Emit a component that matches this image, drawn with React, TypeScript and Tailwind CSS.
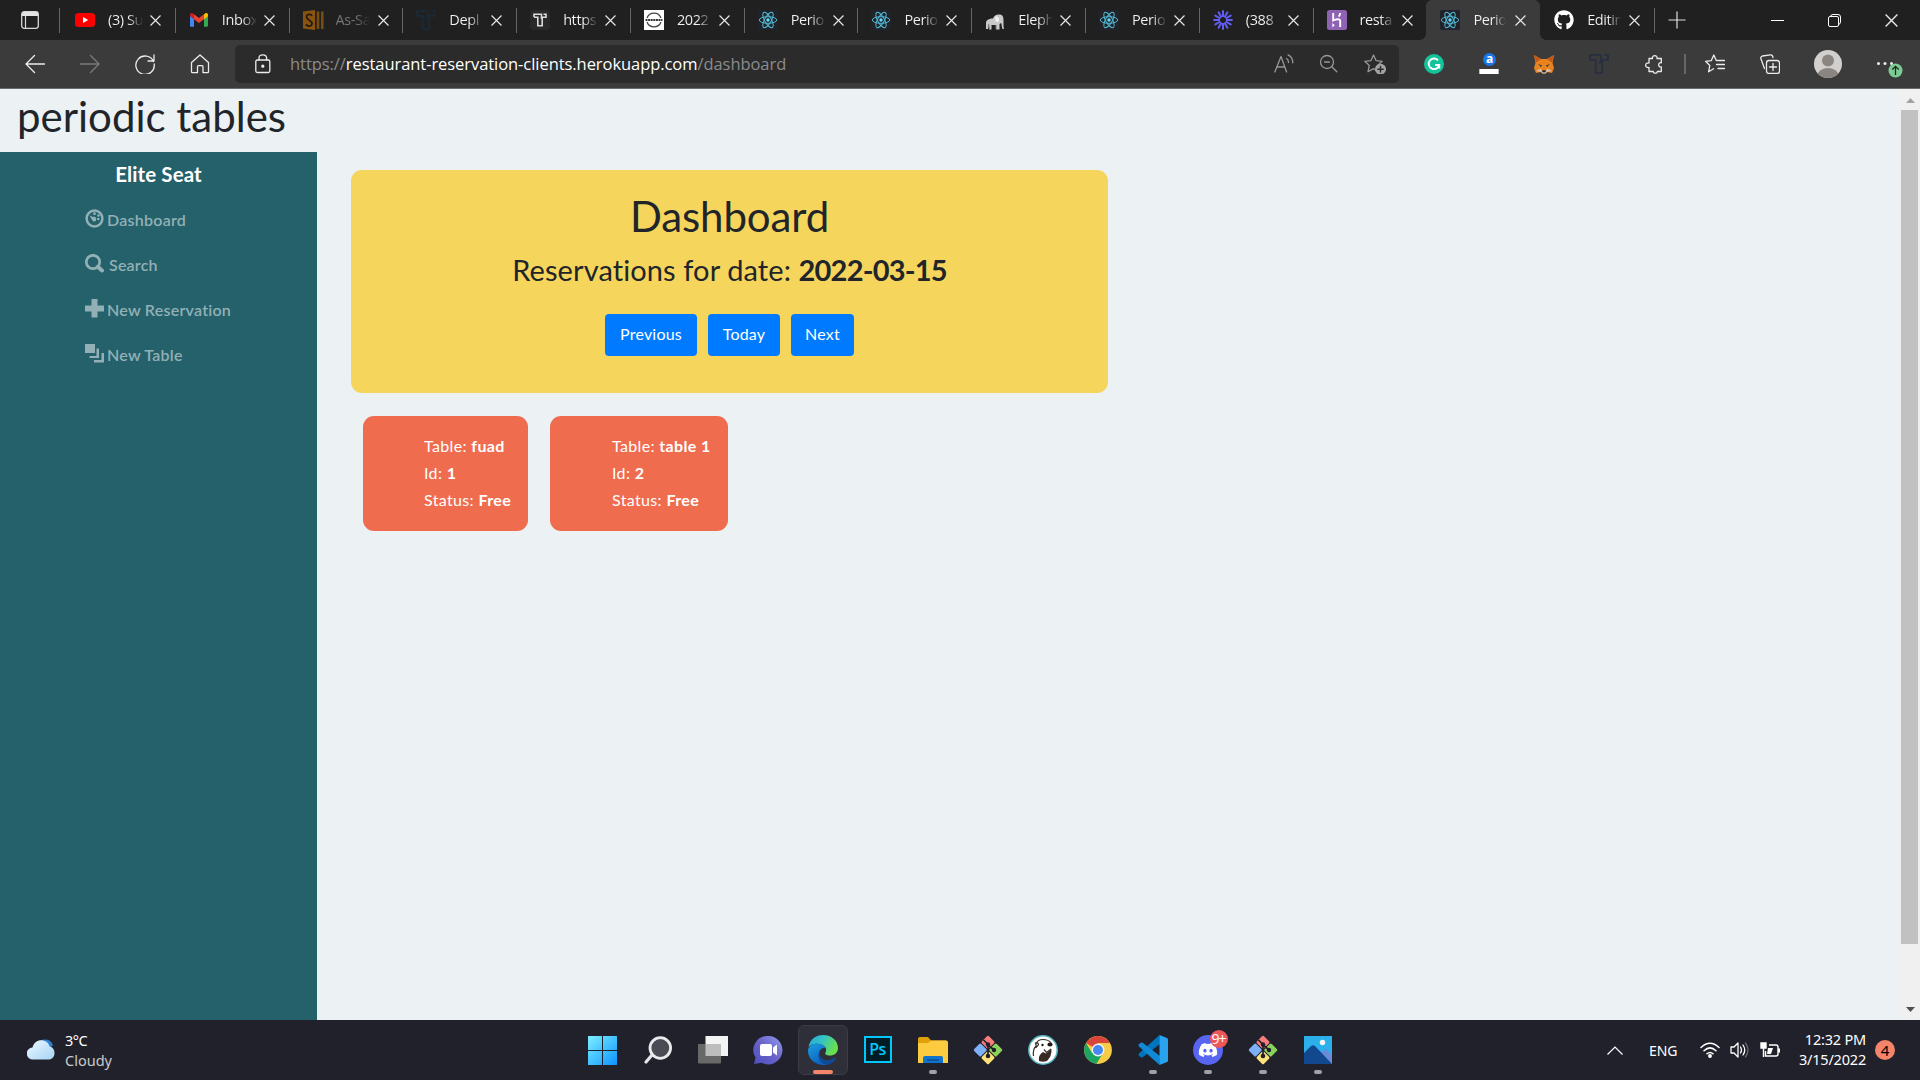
import React from 'react';
import { FaGithub, FaDiscord } from 'react-icons/fa';

type IconFn = () => React.ReactElement;

const YouTube: IconFn = () => (
  <svg width="20" height="20" viewBox="0 0 20 20">
    <rect y="3" width="20" height="14" rx="3.5" fill="#f00" />
    <path d="M8 7l5.2 3L8 13z" fill="#fff" />
  </svg>
);

const Gmail: IconFn = () => (
  <svg width="20" height="20" viewBox="0 0 20 20">
    <path d="M1 5.5v10c0 .8.6 1.3 1.3 1.3H5V8.5z" fill="#4285f4" />
    <path d="M19 5.5v10c0 .8-.6 1.3-1.3 1.3H15V8.5z" fill="#34a853" />
    <path d="M15 4.3v4.9l4-3V4.8c0-1.7-1.8-2.3-2.9-1.4z" fill="#fbbc04" />
    <path d="M5 9.2V4.3l5 3.8 5-3.8v4.9l-5 3.8z" fill="#ea4335" />
    <path d="M1 4.8v1.4l4 3V4.3l-1.1-.9C2.8 2.5 1 3.1 1 4.8z" fill="#c5221f" />
  </svg>
);

const SGold: IconFn = () => (
  <svg width="21" height="20" viewBox="0 0 21 20">
    <path d="M0 1.5L12 0v20L0 18.5z" fill="#8a5410" />
    <path d="M9 6C8 3.500 3.500 4 3.500 7s5.500 3.500 5.500 6.500-4.500 3.500-6 .8" fill="none" stroke="#241c10" strokeWidth="1.8" />
    <path d="M15 1.500v17.500M19.300 1.500v17.500" stroke="#7a4c10" strokeWidth="2.6" />
  </svg>
);

const ThinkfulT = ({ color, size = 20 }: { color: string; size?: number }) => (
  <svg width={size} height={size} viewBox="0 0 20 20" fill="none" stroke={color} strokeWidth="1.7">
    <path d="M.9 5.500V1H12v7.500h-2.500" />
    <path d="M.9 5.800h5.700V19h6.600V5.800H19V1h-3.500" />
  </svg>
);

const DarkT: IconFn = () => <ThinkfulT color="#1b2a38" />;

const TileT: IconFn = () => (
  <span className="flex size-5 items-center justify-center rounded bg-[#2a2a2a]">
    <svg width="14" height="14" viewBox="0 0 14 14" fill="none" stroke="#dcdcdc" strokeWidth="1.6">
      <path d="M1 4V1.200h7.500V6" />
      <path d="M1 4.200h3.800v8.600h4.400V4.200H13V1.200h-2.500" />
    </svg>
  </span>
);

const Nissan: IconFn = () => (
  <svg width="20" height="20" viewBox="0 0 20 20">
    <rect width="20" height="20" fill="#fff" />
    <path d="M3 8a7.500 7.500 0 0 1 14 0M3 12a7.500 7.500 0 0 0 14 0" fill="none" stroke="#444" strokeWidth="1.3" />
    <path d="M1.500 10h17" stroke="#333" strokeWidth="2" strokeDasharray="2 .6" />
  </svg>
);

const ReactLogo: IconFn = () => (
  <svg width="20" height="20" viewBox="-10 -10 20 20" fill="none" stroke="#52b8d4" strokeWidth="1">
    <rect x="-10" y="-10" width="20" height="20" rx="2" fill="#20242a" stroke="none" />
    <ellipse rx="8.7" ry="3.3" />
    <ellipse rx="8.7" ry="3.3" transform="rotate(60)" />
    <ellipse rx="8.7" ry="3.3" transform="rotate(120)" />
    <circle r="1.7" fill="#61dafb" stroke="none" />
  </svg>
);

const Elephant: IconFn = () => (
  <svg width="20" height="20" viewBox="0 0 20 20">
    <path d="M1 19V13c0-3 3-4.500 7-4.500C9 5 12 4 15 4.500c3 .5 3.500 3 3.500 6 0 3-.2 6 .5 8.500h-1.500c-.8-2-.8-4-1.300-6L14.500 14v5.500H11V15H6.500v4.500H4l-.5-5L3 19z" fill="#c9c9c9" />
    <path d="M10 7c2-1 4 0 4 2.500S12 13 10.500 11z" fill="#efefef" />
    <path d="M3.500 14l1 5M11 15v4" stroke="#777" strokeWidth="1" />
  </svg>
);

const Loom: IconFn = () => (
  <svg width="20" height="20" viewBox="-10 -10 20 20" stroke="#625df5" strokeWidth="2" strokeLinecap="round">
    {[0, 30, 60, 90, 120, 150, 180, 210, 240, 270, 300, 330].map((a) => (
      <path key={a} d="M0 -4V-8.900" transform={`rotate(${a})`} />
    ))}
    <circle r="3.8" fill="none" strokeWidth="1.3" />
  </svg>
);

const Heroku: IconFn = () => (
  <svg width="20" height="20" viewBox="0 0 20 20">
    <rect width="20" height="20" rx="2.5" fill="#8f62b3" />
    <path d="M6.200 3v7.500c2-1 7-2.500 7 .5v6M13.200 3c0 1.500-.6 2.600-1.600 3.700" fill="none" stroke="#fff" strokeWidth="1.9" />
    <path d="M5.300 13v4.400l2.500-2.200z" fill="#fff" />
  </svg>
);

const Github: IconFn = () => <FaGithub size={20} color="#fff" />;

const tabs: { icon: IconFn; title: string; dim?: boolean; active?: boolean }[] = [
  { icon: YouTube, title: '(3) Su' },
  { icon: Gmail, title: 'Inbox' },
  { icon: SGold, title: 'As-Sa', dim: true },
  { icon: DarkT, title: 'Depl' },
  { icon: TileT, title: 'https' },
  { icon: Nissan, title: '2022' },
  { icon: ReactLogo, title: 'Perio' },
  { icon: ReactLogo, title: 'Perio' },
  { icon: Elephant, title: 'Eleph' },
  { icon: ReactLogo, title: 'Perio' },
  { icon: Loom, title: '(388' },
  { icon: Heroku, title: 'resta' },
  { icon: ReactLogo, title: 'Perio', active: true },
  { icon: Github, title: 'Editin' },
];

function Close({ size = 11 }: { size?: number }) {
  return (
    <svg width={size} height={size} viewBox="0 0 11 11" stroke="#e6e6e6" strokeWidth="1.2" className="shrink-0">
      <path d="M.5 .5l10 10M10.500 .5l-10 10" />
    </svg>
  );
}

function TabStrip() {
  return (
    <div className="flex h-10 bg-[#202020]">
      <div className="flex w-[61px] shrink-0 items-center pl-[21px]">
        <svg width="18" height="18" viewBox="0 0 18 18">
          <rect x=".7" y=".7" width="16.600" height="16.600" rx="2.5" fill="none" stroke="#d8d8d8" strokeWidth="1.3" />
          <path d="M1 2.500Q1 1 3 1h12q2 0 2 2v2H1z" fill="#e4e4e4" />
          <path d="M4.500 5v12" stroke="#d8d8d8" strokeWidth="1.2" />
        </svg>
      </div>
      <div className="relative flex w-[1593px] shrink-0">
        <div className="absolute top-2 -left-0.5 h-[25px] w-px bg-[#666]" />
        {tabs.map((t, i) => (
          <div
            key={i}
            className={
              t.active
                ? 'relative flex min-w-0 flex-1 items-center rounded-t-md bg-[#3b3b3b] pl-[14px]'
                : 'relative flex min-w-0 flex-1 items-center pl-[14px] first:pl-[12px]'
            }
          >
            {t.active && (
              <>
                <span className="absolute bottom-0 -left-1.5 size-1.5 bg-[radial-gradient(circle_at_0_0,transparent_5.5px,#3b3b3b_6px)]" />
                <span className="absolute -right-1.5 bottom-0 size-1.5 bg-[radial-gradient(circle_at_100%_0,transparent_5.5px,#3b3b3b_6px)]" />
              </>
            )}
            <span className="flex w-[33px] shrink-0">
              <t.icon />
            </span>
            <span
              className={
                t.dim
                  ? "w-[34px] bg-gradient-to-r from-[#777] from-60% to-[#202020] bg-clip-text font-['Open_Sans'] text-[14.5px] tracking-[-0.4px] whitespace-nowrap text-transparent"
                  : "w-[34px] bg-gradient-to-r from-[#f4f4f4] from-60% to-[#303030] bg-clip-text font-['Open_Sans'] text-[14.5px] tracking-[-0.4px] whitespace-nowrap text-transparent"
              }
            >
              {t.title}
            </span>
            <span className="ml-[8px] flex pt-px">
              <Close />
            </span>
            {!t.active && i !== 11 && <span className="absolute top-2 -right-px h-[25px] w-px bg-[#666]" />}
          </div>
        ))}
      </div>
      <div className="flex flex-1 items-center pl-[14px]">
        <svg width="18" height="18" viewBox="0 0 18 18" stroke="#dedede" strokeWidth="1.2" className="-mt-px">
          <path d="M9 .5v17M.5 9h17" />
        </svg>
        <div className="ml-auto flex items-center gap-[44px] pr-[22px]">
          <svg width="13" height="14" viewBox="0 0 13 14" stroke="#fff" className="-ml-px"><path d="M0 7.500h13" /></svg>
          <svg width="13" height="13" viewBox="0 0 13 13" fill="none" stroke="#fff">
            <rect x=".5" y="2.5" width="10" height="10" rx="1.5" />
            <path d="M2.500 2.500Q2.700 .5 5 .5h5q2.500 0 2.500 2.500v5q0 2-2 2.500" />
          </svg>
          <Close size={13} />
        </div>
      </div>
    </div>
  );
}

const S = ({ children, w = 20, c = '#ececec', sw = 1.3 }: { children: React.ReactNode; w?: number; c?: string; sw?: number }) => (
  <svg width={w} height="20" viewBox={`0 0 ${w} 20`} fill="none" stroke={c} strokeWidth={sw} strokeLinecap="round" strokeLinejoin="round" className="shrink-0">
    {children}
  </svg>
);

const star = 'M9.500 1l2.500 5.600 6.200.7-4.600 4.200 1.300 6.200-5.400-3.100L4 17.700l1.300-6.200L.8 7.300 7 6.600z';

function Toolbar() {
  return (
    <div className="flex h-[49px] items-center border-b border-[#6c6c6c] bg-[#3b3b3b] pl-[25px]">
      <div className="flex items-center gap-[35px]">
        <S><path d="M19.500 10H1M9.500 1.500L1 10l8.500 8.500" /></S>
        <S c="#7b7b7b"><path d="M.5 10H19M10.500 1.500L19 10l-8.500 8.500" /></S>
        <S><path d="M18.500 7.500A9.200 9.200 0 1 0 19.200 10M19 1v6h-6" /></S>
        <S><path d="M1.500 8.500L10 1l8.500 7.500v9.200q0 1-1 1H13v-6q0-1-1-1H8.500q-1 0-1 1v6H2.500q-1 0-1-1z" /></S>
      </div>
      <div className="ml-[25px] flex h-[38px] w-[1164px] shrink-0 items-center rounded-[5px] bg-[#2b2b2b] pl-5">
        <S w={16}>
          <rect x=".8" y="6" width="14" height="12.500" rx="1.5" />
          <path d="M4 6V4q0-3.200 3.800-3.200T11.600 4v2" />
          <circle cx="7.800" cy="12.200" r="1" fill="#eee" />
        </S>
        <div className="ml-[19px] font-['Open_Sans'] text-[16.5px] tracking-[-0.06px] whitespace-nowrap text-[#8b8b8b]">
          https://<span className="text-white">restaurant-reservation-clients.herokuapp.com</span>/dashboard
        </div>
        <div className="ml-auto flex items-center gap-[25px] pr-[13px]">
          <S c="#979797">
            <path d="M.8 18L7 2.500 12.600 18M2.800 13h8M12.500 4.500q2 1.200 2 4M14 .8q4.800 2 4.800 8" />
          </S>
          <S c="#979797">
            <circle cx="8" cy="8" r="6.500" /><path d="M5.500 8h5M12.800 12.800l5 5" />
          </S>
          <S w={22} c="#979797">
            <path d={star} />
            <circle cx="16.500" cy="15.200" r="5.500" fill="#a3a3a3" stroke="none" />
            <path d="M16.500 12.500v5.400M13.800 15.200h5.400" stroke="#2b2b2b" strokeWidth="1.5" />
          </S>
        </div>
      </div>
      <div className="ml-[25px] flex items-center gap-[35px]">
        <svg width="20" height="20" viewBox="0 0 20 20">
          <circle cx="10" cy="10" r="10" fill="#15c39a" />
          <path d="M14 6.300a5.300 5.300 0 1 0 1.200 4.700H11M15.300 11v3.500" fill="none" stroke="#fff" strokeWidth="1.9" />
        </svg>
        <span className="relative flex size-5 items-end">
          <span className="absolute -top-px left-1 flex size-[13px] items-center justify-center rounded-full bg-[#1877e8] pb-0.5 font-['Open_Sans'] text-[12px] leading-none font-bold text-white">a</span>
          <span className="h-[5px] w-full border-x border-[#bbb] bg-white" />
        </span>
        <svg width="20" height="20" viewBox="0 0 20 20">
          <path d="M0 1l7 4h6l7-4-1.500 8L20 14l-2 5-5-1-1.500 1.500h-3L7 18l-5 1-2-5 1.500-5z" fill="#e8831d" />
          <path d="M0 1l7 4-5 3.500zM20 1l-7 4 5 3.500z" fill="#c1591b" />
          <path d="M4 10l4 1.500L7 13zM16 10l-4 1.500 1 1.500z" fill="#233447" />
          <path d="M6.500 14.500L2 17l5 1 1.500 1.500h3L13 18l5-1-4.500-2.500L12 17H8z" fill="#d6bfb2" />
          <path d="M8.300 16.300h3.400v2H8.300z" fill="#222" />
        </svg>
        <ThinkfulT color="#252f40" />
        <S><path d="M5 4.500h3.500c-1-3.800 5.500-3.800 4.500 0H17.300v4.300c-3.500-.8-3.500 4.800 0 4v4.700h-4c.5 2.200-4.500 2.200-4 0H5v-4c-4.500 .5-4.500-5 0-4.500z" /></S>
      </div>
      <div className="ml-5 h-5 w-0.5 bg-[#666]" />
      <div className="ml-[19px] flex items-center gap-[35px]">
        <S>
          <path d="M12.500 6.500H11.300L8.800 1 6.300 6.600.6 7.300l4.200 4.200-1.200 6.300 5-3M13.500 6.500h6M11.500 10.500h8M13 14.500h6.500" />
        </S>
        <S>
          <rect x="6.500" y="6.500" width="13" height="13" rx="2.5" />
          <path d="M13 9.500v7M9.500 13h7M4.500 14.500L1 5q-.8-2.200 1.300-3L10.500.8q2-.2 2.500 2.700" />
        </S>
      </div>
      <svg width="28" height="28" viewBox="0 0 28 28" className="ml-[34px] shrink-0">
        <clipPath id="avatar"><circle cx="14" cy="14" r="14" /></clipPath>
        <circle cx="14" cy="14" r="14" fill="#d2d0ce" />
        <g fill="#8a8581" clipPath="url(#avatar)"><circle cx="14" cy="10.500" r="6" /><ellipse cx="14" cy="25.500" rx="10.500" ry="7.500" /></g>
      </svg>
      <svg width="28" height="28" viewBox="0 0 28 28" className="ml-[34px] shrink-0">
        <g fill="#eee"><circle cx="2.500" cy="13.500" r="1.500" /><circle cx="9" cy="13.500" r="1.500" /><circle cx="15.500" cy="13.500" r="1.500" /></g>
        <circle cx="19.500" cy="20.500" r="7" fill="#7ccb94" />
        <path d="M19.500 25v-8.500M16.300 19.500l3.200-3.200 3.200 3.200" fill="none" stroke="#1e2a22" strokeWidth="1.3" />
      </svg>
    </div>
  );
}

const navItems: { label: string; nudge?: boolean; icon: React.ReactNode }[] = [
  {
    label: 'Dashboard',
    icon: (
      <>
        <circle cx="9.500" cy="9.500" r="7.900" fill="none" stroke="currentColor" strokeWidth="2.5" />
        <path d="M4.500 6.500L8 8c2-1 4 1 3 3.500-.8 1.800-3.500 1.300-4-.8z" />
        <circle cx="9.500" cy="4.700" r="1.400" /><circle cx="13.500" cy="6.500" r="1.300" /><circle cx="13.300" cy="10" r="1.300" />
      </>
    ),
  },
  {
    label: 'Search',
    nudge: true,
    icon: (
      <>
        <circle cx="8" cy="8" r="6.700" fill="none" stroke="currentColor" strokeWidth="2.7" />
        <path d="M12.800 12.800l4.200 3.700" stroke="currentColor" strokeWidth="4" strokeLinecap="round" />
      </>
    ),
  },
  { label: 'New Reservation', icon: <path d="M6.500 0h6v6.500H19v6h-6.500V18.500h-6v-6H0v-6h6.500z" /> },
  { label: 'New Table', icon: <path d="M0 0h10v9H0zM11.500 4.500H14V14H4.500v-2h7zM16.500 9H19v9.500H9V16h7.500z" /> },
];

function Sidebar() {
  return (
    <aside className="w-[317px] shrink-0 bg-[#25616b] font-['Lato']">
      <div className="flex h-[45px] items-center justify-center pb-px text-[20.5px] font-bold tracking-[0.1px] text-white">Elite Seat</div>
      <nav className="pl-[85px] text-[#92b0b5]">
        {navItems.map((n) => (
          <a key={n.label} className="flex h-[45px] items-center">
            <svg width="19" height="19" viewBox="0 0 19 19" fill="currentColor" className="mb-0.5 shrink-0">{n.icon}</svg>
            <span
              className={
                n.nudge
                  ? 'ml-[5px] text-[16px] font-semibold tracking-[0.2px]'
                  : 'ml-[3px] text-[16px] font-semibold tracking-[0.25px]'
              }
            >
              {n.label}
            </span>
          </a>
        ))}
      </nav>
    </aside>
  );
}

function TableCard({ name, id, wide }: { name: string; id: number; wide?: boolean }) {
  return (
    <div
      className={
        wide
          ? 'h-[115px] w-[178px] rounded-[11px] bg-[#ef6c4e] pt-[16px] pl-[62px] text-white'
          : 'h-[115px] w-[165px] rounded-[11px] bg-[#ef6c4e] pt-[16px] pl-[61px] text-white'
      }
    >
      <div className="text-[16px] leading-[27px] tracking-[0.35px] whitespace-nowrap">
        <p>Table: <b>{name}</b></p>
        <p>Id: <b>{id}</b></p>
        <p>Status: <b>Free</b></p>
      </div>
    </div>
  );
}

function Page() {
  return (
    <div className="flex h-[931px] bg-[#ecf1f4]">
      <div className="flex flex-1 flex-col">
        <h1 className="flex h-[63px] items-center pb-[8px] pl-[17px] font-['Lato'] text-[42px] text-[#212529]">periodic tables</h1>
        <div className="flex flex-1">
          <Sidebar />
          <main className="flex-1 pt-[18px] pl-[34px] font-['Lato']">
            <section className="flex h-[223px] w-[757px] flex-col items-center rounded-[11px] bg-[#f5d55b] text-[#212529]">
              <h2 className="mt-[19px] text-[42px] leading-[54px] tracking-[-0.1px]">Dashboard</h2>
              <p className="mt-[7px] text-[29px] leading-[40px] tracking-[0.1px] whitespace-nowrap">
                Reservations for date: <b className="tracking-[-0.8px]">2022-03-15</b>
              </p>
              <div className="mt-[24px] flex gap-[11px] text-[16px] tracking-[0.2px] text-white">
                <button className="h-[42px] w-[92px] rounded bg-[#007bff] pb-0.5">Previous</button>
                <button className="h-[42px] w-[72px] rounded bg-[#007bff] pb-0.5">Today</button>
                <button className="h-[42px] w-[63px] rounded bg-[#007bff] pb-0.5">Next</button>
              </div>
            </section>
            <div className="mt-[23px] ml-3 flex gap-[22px]">
              <TableCard name="fuad" id={1} />
              <TableCard name="table 1" id={2} wide />
            </div>
          </main>
        </div>
      </div>
      <div className="flex w-5 shrink-0 flex-col items-center bg-[#f0f0f0] pb-2">
        <svg width="9" height="5" viewBox="0 0 9 5" className="mt-[9px]"><path d="M0 5L4.500 0 9 5z" fill="#a3a3a3" /></svg>
        <div className="mt-[7px] mr-px h-[834px] w-[17px] bg-[#c1c1c1]" />
        <svg width="9" height="5" viewBox="0 0 9 5" className="mt-auto"><path d="M0 0h9L4.500 5z" fill="#505050" /></svg>
      </div>
    </div>
  );
}

const I = ({ children }: { children: React.ReactNode }) => (
  <svg width="30" height="30" viewBox="0 0 30 30">{children}</svg>
);

const GitIcon = () => (
  <I>
    <g transform="rotate(45 15 15)">
      <rect x="4.500" y="4.500" width="10" height="10" rx="1.5" fill="#f97c7c" />
      <rect x="15.500" y="4.500" width="10" height="10" rx="1.5" fill="#8bd15c" />
      <rect x="4.500" y="15.500" width="10" height="10" rx="1.5" fill="#7eb0f8" />
      <rect x="15.500" y="15.500" width="10" height="10" rx="1.5" fill="#fde27a" />
    </g>
    <path d="M10.500 5L15 9.500V21M15 10l6 5" stroke="#20202a" strokeWidth="1.7" fill="none" />
    <g fill="#20202a"><circle cx="15" cy="9.500" r="2.200" /><circle cx="21" cy="15" r="2.200" /><circle cx="15" cy="21" r="2.300" /></g>
  </I>
);

const dock: { key: string; icon: React.ReactNode; run?: boolean; active?: boolean }[] = [
  {
    key: 'start',
    icon: (
      <I>
        <defs><linearGradient id="win" x1="0" y1="0" x2="1" y2="1" gradientUnits="objectBoundingBox"><stop stopColor="#7df0ff" /><stop offset="1" stopColor="#0b93ff" /></linearGradient></defs>
        <path d="M0 1.500q0-.5.5-.5h13.500v14H0zM15 1h13.500q.5 0 .5.500V15h-14zM0 16h14v14H.5q-.5 0-.5-.5zM15 16h14v13.500q0 .5-.5.500H15z" fill="url(#win)" />
      </I>
    ),
  },
  {
    key: 'search',
    icon: (
      <I>
        <path d="M9 20l-6 7" stroke="#e4e7ea" strokeWidth="3.2" strokeLinecap="round" />
        <circle cx="17.300" cy="13" r="10.300" fill="#4a4b55" stroke="#e8ebee" strokeWidth="2.8" />
      </I>
    ),
  },
  {
    key: 'taskview',
    icon: (
      <I>
        <rect x="7.500" y="1" width="22.500" height="20" fill="#f3f3f3" />
        <rect x="0" y="9" width="23" height="19.500" rx="1" fill="#686868" />
        <rect x="7.500" y="9" width="15.500" height="12" fill="#bdbdbd" />
      </I>
    ),
  },
  {
    key: 'chat',
    icon: (
      <I>
        <defs><linearGradient id="chat" x1="0" y1="1" x2="1" y2="0"><stop stopColor="#4b4fc0" /><stop offset=".5" stopColor="#6a62c8" /><stop offset="1" stopColor="#8f9cf0" /></linearGradient></defs>
        <path d="M15 1a14.200 14.200 0 1 1-6.500 26.700L1 29l1.500-6.300A14.200 14.200 0 0 1 15 1z" fill="url(#chat)" />
        <rect x="7" y="9" width="12" height="12" rx="2" fill="#fff" /><path d="M20 12.500L24 9.500v11l-4-3z" fill="#fff" />
      </I>
    ),
  },
  {
    key: 'edge',
    active: true,
    icon: (
      <I>
        <defs>
          <linearGradient id="e1" x1="0" y1="0" x2="1" y2=".4"><stop stopColor="#22a7e5" /><stop offset=".5" stopColor="#35c4c0" /><stop offset="1" stopColor="#6ae04d" /></linearGradient>
          <linearGradient id="e2" x1="0" y1="0" x2=".5" y2="1"><stop stopColor="#1b9de2" /><stop offset="1" stopColor="#0c63bd" /></linearGradient>
        </defs>
        <path d="M.5 12C2 4 8 0 15 0c9 0 15 6 15 13 0 5-4 7.500-8 7.500-4 0-5.500-1.500-4.500-3 1.500-2.500.5-6-3-7.500C10 8 4 8.500.5 12z" fill="url(#e1)" />
        <path d="M0 15C1 10 6 8 10.500 8.500c3.500.5 6 2.500 6.800 4.500C10 12.500 9.500 21 14 26c1.500 2 3.500 3.500 5.500 3.700C9 31.500-.5 25 0 15z" fill="url(#e2)" />
        <path d="M12 15.500c-2 6 3.500 10.500 9 9.500 3-.5 5-1.700 6.500-2.500.5-.3 1 .3.700.8C26.500 26.500 23 29.500 19 30c-7-1.500-11-9-7-14.500z" fill="#114a94" />
      </I>
    ),
  },
  {
    key: 'ps',
    icon: (
      <span className="mb-0.5 flex h-[27px] w-[28px] items-center justify-center border-2 border-[#00c8ff] bg-[#001d26] pb-px font-['Open_Sans'] text-[16px] leading-none font-semibold tracking-[-0.5px] text-[#00c8ff]">
        Ps
      </span>
    ),
  },
  {
    key: 'files',
    run: true,
    icon: (
      <I>
        <path d="M0 4q0-2 2-2h8l3 3.500h15V10H0z" fill="#e0a008" />
        <path d="M0 8h10l3-2.500h15q2 0 2 2V28H0z" fill="#fccb3f" />
        <path d="M5 28v-5q0-2 2-2h16q2 0 2 2v5z" fill="#1273cc" /><path d="M9 25h12" stroke="#0a4c93" strokeWidth="1.5" />
      </I>
    ),
  },
  { key: 'git', icon: <GitIcon /> },
  {
    key: 'dbeaver',
    icon: (
      <I>
        <circle cx="15" cy="15" r="14.200" fill="#fff" stroke="#58b4bd" strokeWidth="1.5" />
        <path d="M11 26q-1-6 4-9l3 1.500 5.500-4.500q.5 7-4.500 12-4 1.500-8 0z" fill="#3a2a24" />
        <path d="M16 14.500l2.500 3L23 14" fill="none" stroke="#3a302c" strokeWidth="1.2" />
        <ellipse cx="22" cy="9.500" rx="2.600" ry="2" fill="#1e1a18" /><circle cx="14.500" cy="10" r="1.200" fill="#1e1a18" />
        <path d="M8 9q1.500-4.500 7-4.500 5.500 0 8 3.500M7.500 8q2.500-1 3 1.500L8.500 12zM5.500 21q-1-6 2.500-10" fill="none" stroke="#3a302c" strokeWidth="1.2" />
      </I>
    ),
  },
  {
    key: 'chrome',
    icon: (
      <I>
        <circle cx="15" cy="15" r="13.900" fill="#f7cb46" />
        <path d="M15 15L3 8A13.900 13.900 0 0 1 27 8H15z" fill="#d9453a" />
        <path d="M3 8a13.900 13.900 0 0 0 10.500 20.800L20 18 9 18z" fill="#1ba462" />
        <circle cx="15" cy="15" r="6.400" fill="#f4f4f4" /><circle cx="15" cy="15" r="5" fill="#4688f1" />
      </I>
    ),
  },
  {
    key: 'vscode',
    run: true,
    icon: (
      <I>
        <path d="M21.500 0L1 18.500q-1 1.200 0 2.200l1.700 1.500q1 .7 2 0L22 9z" fill="#0074bd" />
        <path d="M21.500 30L1 11.500q-1-1.200 0-2.200l1.700-1.500q1-.7 2 0L22 21z" fill="#1089d6" />
        <path d="M21.500 0l7.500 3q1 .5 1 1.500v21q0 1-1 1.500l-7.500 3z" fill="#2aa3ef" />
      </I>
    ),
  },
  {
    key: 'discord',
    run: true,
    icon: (
      <span className="relative flex size-[30px] items-center justify-center rounded-full bg-[#5765f1]">
        <FaDiscord size={20} color="#fff" />
        <span className="absolute -top-[5px] left-[17px] flex size-[18px] items-center justify-center rounded-full bg-[#ee5759] pb-px font-['Open_Sans'] text-[14px] leading-none tracking-[-1px] text-white">
          9+
        </span>
      </span>
    ),
  },
  { key: 'git2', run: true, icon: <GitIcon /> },
  {
    key: 'photos',
    run: true,
    icon: (
      <I>
        <rect x="1" y="1" width="28" height="28" fill="#2bb0ec" />
        <path d="M15 21l6-6q1.500-1.500 3 0l5 5v9H15z" fill="#6a8bd8" />
        <path d="M1 18l7-7q2-1.500 4 0l17 18H1z" fill="#12488e" />
        <circle cx="19.500" cy="7.500" r="2.700" fill="#f4f6f4" />
      </I>
    ),
  },
];

function Taskbar() {
  return (
    <div className="flex h-[60px] bg-[#21212b] font-['Noto_Sans'] text-[14.5px] text-white">
      <div className="flex w-[575px] shrink-0 items-center pl-[27px]">
        <svg width="28" height="22" viewBox="0 0 28 22">
          <defs><linearGradient id="cl" x1="0" y1="0" x2="1" y2="1"><stop stopColor="#f2faff" /><stop offset=".5" stopColor="#c8e6fa" /><stop offset="1" stopColor="#a6d4f4" /></linearGradient></defs>
          <path d="M14 1q9-2 12 5l-4 4z" fill="#2f7fce" />
          <path d="M6 20.500a6 6 0 0 1-.5-12C7 3 11 .8 15 1.200c4 .4 7 3 7.500 6.300 3 .5 5 3 5 6.500 0 4-2.500 6.500-6 6.500z" fill="url(#cl)" />
        </svg>
        <div className="ml-[10px] leading-5">
          <div className="tracking-[-0.5px]">3°C</div>
          <div className="text-[#c9c9cc]">Cloudy</div>
        </div>
      </div>
      <div className="flex">
        {dock.map((d) => (
          <div key={d.key} className="relative flex w-[55px] items-center justify-center">
            {d.active && <span className="absolute top-[5px] left-[3px] h-[50px] w-[50px] rounded-md border border-[#3c3c46] bg-[#2f2f39]" />}
            <span className="relative flex">{d.icon}</span>
            {d.active && <span className="absolute bottom-1.5 left-[18px] h-1 w-5 rounded-full bg-[#f4846a]" />}
            {d.run && <span className="absolute bottom-1.5 left-[24px] h-1 w-2 rounded-full bg-[#a0a0a5]" />}
          </div>
        ))}
      </div>
      <div className="ml-auto flex items-center pr-[25px]">
        <svg width="16" height="9" viewBox="0 0 16 9" fill="none" stroke="#fff" strokeWidth="1.2"><path d="M.5 8.500L8 1l7.500 7.500" /></svg>
        <span className="ml-[26px] w-[30px] text-[14px] tracking-[-0.1px]">ENG</span>
        <svg width="20" height="16" viewBox="0 0 20 16" fill="none" stroke="#fff" strokeWidth="1.5" strokeLinecap="round" className="ml-[21px]">
          <path d="M1 5.500q9-8.500 18 0M4 8.700q6-5.600 12 0M7 11.800q3-2.700 6 0" /><circle cx="10" cy="14" r="1.200" fill="#fff" />
        </svg>
        <svg width="20" height="18" viewBox="0 0 20 18" fill="none" stroke="#fff" strokeWidth="1.3" strokeLinejoin="round" strokeLinecap="round" className="ml-[10px]">
          <path d="M1 6h3l4-4v14l-4-4H1zM10.500 6q2 3 0 6M13 4q3.500 5 0 10" /><path d="M15.500 2q5 7 0 14" stroke="#666670" />
        </svg>
        <svg width="20" height="16" viewBox="0 0 20 16" fill="none" stroke="#fff" strokeWidth="1.4" className="ml-[10px]">
          <path d="M9 3h7q2 0 2 2v7q0 2-2 2H5.500V9" /><path d="M1 1v5h5V1zM3.500 6v9" fill="#fff" /><path d="M8 6h5L11 12H7z" fill="#fff" stroke="none" /><path d="M19 6.500v4" strokeWidth="2" />
        </svg>
        <div className="ml-4 w-[70px] text-right text-[14.5px] leading-5 tracking-[-0.2px] whitespace-nowrap">
          <div className="-mt-0.5">12:32 PM</div>
          <div>3/15/2022</div>
        </div>
        <span className="ml-[9px] flex size-5 items-center justify-center rounded-full bg-[#f4846a] text-[15px] text-black">4</span>
      </div>
    </div>
  );
}

export default function App() {
  return (
    <div className="flex h-[1080px] w-[1920px] flex-col overflow-hidden">
      <TabStrip />
      <Toolbar />
      <Page />
      <Taskbar />
    </div>
  );
}
